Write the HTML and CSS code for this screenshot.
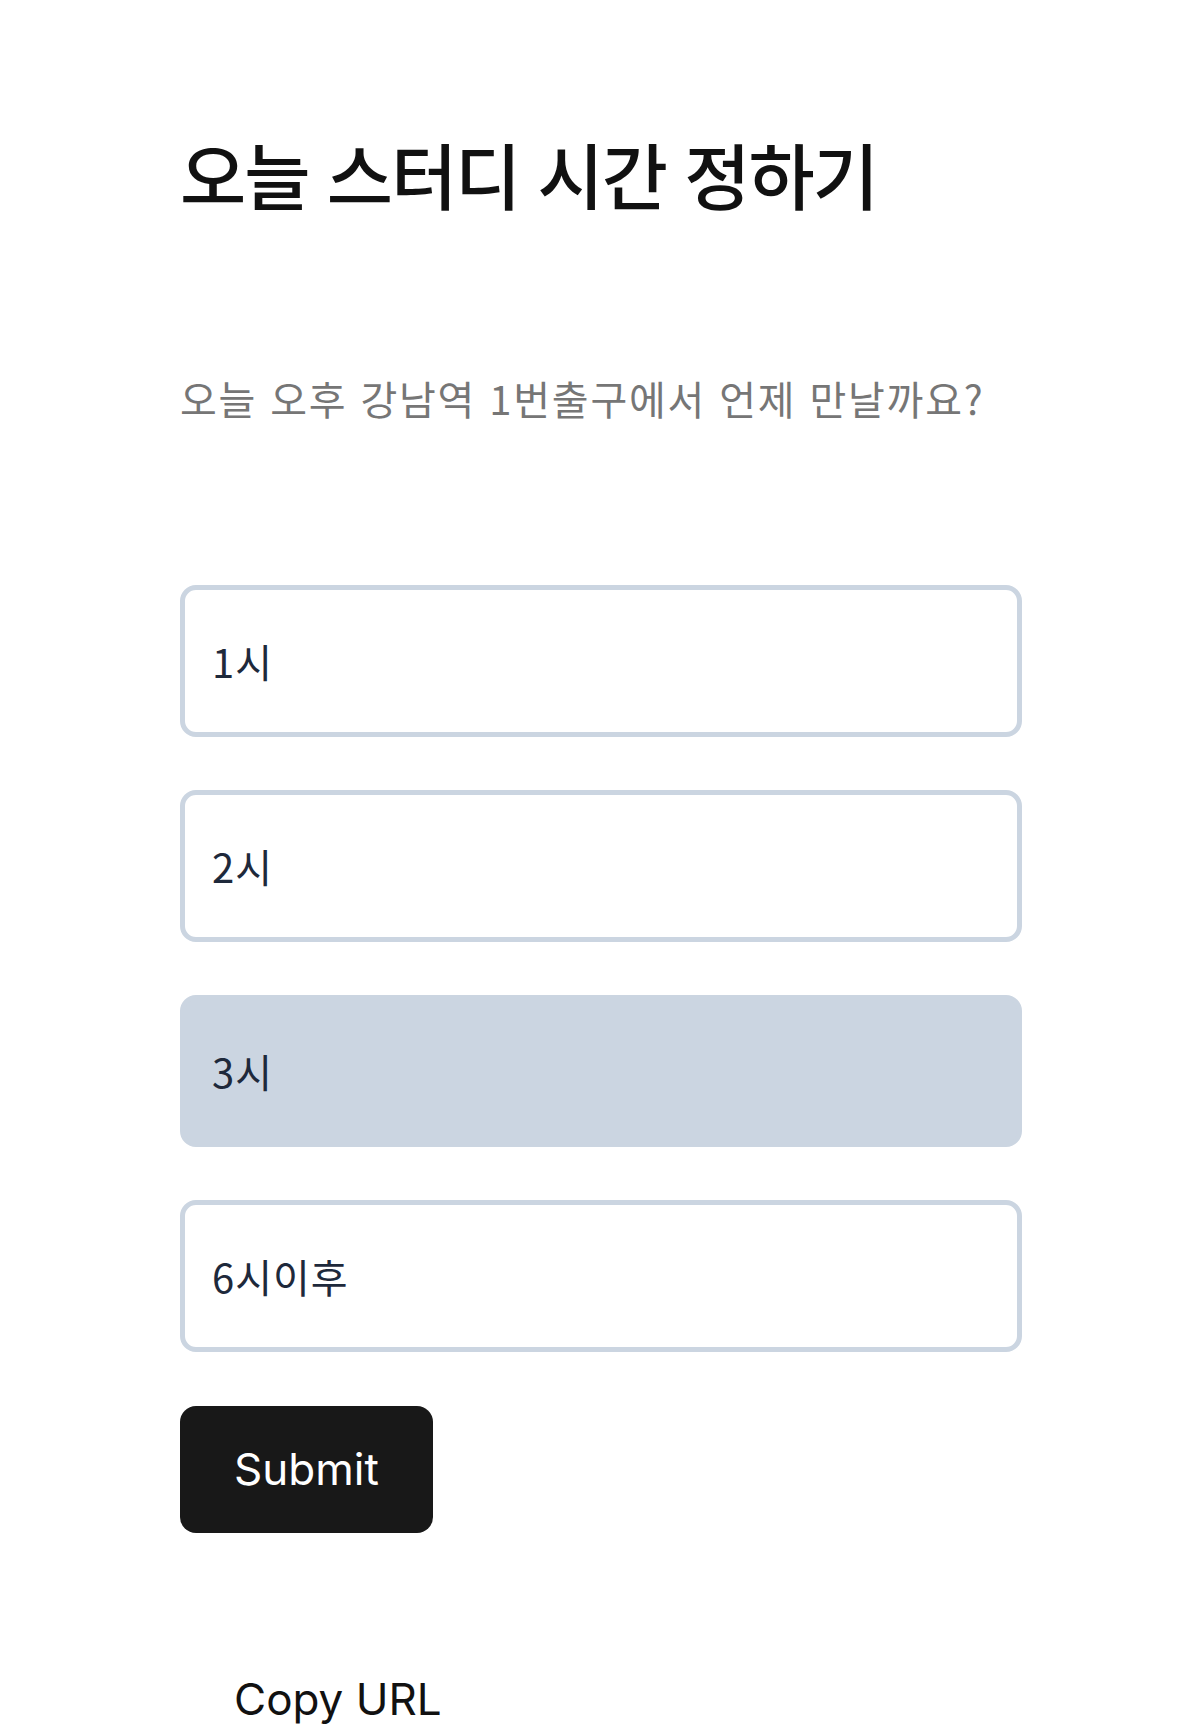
FILE: index.html
```html
<!DOCTYPE html>
<html lang="ko">
<head>
<meta charset="utf-8">
<title>오늘 스터디 시간 정하기</title>
<link rel="stylesheet" href="styles.css">
</head>
<body>
<main class="page">
  <h1 class="title">오늘 스터디 시간 정하기</h1>
  <p class="subtitle">오늘 오후 강남역 1번출구에서 언제 만날까요?</p>
  <ul class="options">
    <li class="option">1시</li>
    <li class="option">2시</li>
    <li class="option option-selected">3시</li>
    <li class="option">6시이후</li>
  </ul>
  <div class="actions">
    <button class="btn btn-primary" type="button">Submit</button>
    <button class="btn btn-link" type="button">Copy URL</button>
  </div>
</main>
</body>
</html>
```
FILE: styles.css
```css
html, body {
  margin: 0;
  padding: 0;
  background: #ffffff;
}

body {
  font-family: "Noto Sans CJK KR", "Noto Sans", sans-serif;
}

.page {
  padding: 130px 178px 0 180px;
  display: flex;
  flex-direction: column;
  align-items: flex-start;
}

.title {
  margin: 0;
  font-size: 72px;
  line-height: 86px;
  font-weight: 500;
  color: #111111;
  letter-spacing: -2px;
}

.subtitle {
  margin: 158px 0 0;
  font-size: 40px;
  line-height: 48px;
  font-weight: 400;
  color: #767676;
  letter-spacing: 1.8px;
}

.options {
  list-style: none;
  margin: 163px 0 0;
  padding: 0;
  width: 842px;
  display: flex;
  flex-direction: column;
  gap: 53px;
}

.option {
  box-sizing: border-box;
  height: 152px;
  border: 5px solid #cbd5e1;
  border-radius: 16px;
  padding: 0 27px;
  display: flex;
  align-items: center;
  font-size: 40px;
  color: #1e293b;
  background: #ffffff;
  letter-spacing: 1px;
}

.option-selected {
  background: #cbd5e1;
}

.actions {
  margin-top: 54px;
  display: flex;
  flex-direction: column;
  align-items: flex-start;
  gap: 103px;
}

.btn {
  font-family: Inter, "Noto Sans", sans-serif;
  font-size: 44px;
  line-height: 51px;
  font-weight: 400;
  padding: 38px 54px;
  border: none;
  border-radius: 16px;
  cursor: pointer;
  margin: 0;
}

.btn-primary {
  background: #181818;
  color: #ffffff;
}

.btn-link {
  background: transparent;
  color: #111111;
}
```
